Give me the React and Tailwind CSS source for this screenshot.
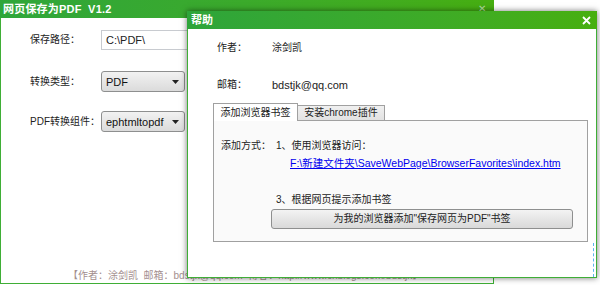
import React from 'react';

const font = "font-['Liberation_Sans','Noto_Sans_CJK_SC',sans-serif]";

function ArrowDown() {
    return (
        <svg width="7" height="4" viewBox="0 0 7 4" className="shrink-0">
            <path d="M0 0 L7 0 L3.5 4 Z" fill="#222" />
        </svg>
    );
}

function Select({ value }) {
    return (
        <div className="w-[84px] h-[21px] flex items-center justify-between pl-[4px] pr-[5px] rounded-[3px] border border-[#8e8f8f] bg-gradient-to-b from-[#f2f2f2] to-[#dbdbdb] text-[11px] text-[#111]">
            <span>{value}</span>
            <ArrowDown />
        </div>
    );
}

function MainWindow() {
    return (
        <div className="absolute left-0 top-0 w-[494px] h-[284px] border border-[#3fae36] bg-white flex flex-col">
            <div className="h-[18px] shrink-0 flex items-start justify-between bg-gradient-to-r from-[#2fa63a] to-[#46ae10] pl-[3px] pr-[8px] -mx-px -mt-px">
                <span className="text-white font-bold text-[11px] leading-[18px] tracking-[0.2px]">网页保存为PDF&nbsp;&nbsp;V1.2</span>
                <div className="flex items-center gap-[36px] text-white/60 text-[10px] mt-[2px]">
                    <span className="block w-[8px] h-[2px] bg-white/60 mt-[5px]" />
                    <span>✕</span>
                </div>
            </div>
            <div className="flex flex-col pl-[29px] pt-[12px] text-[10px] text-[#222]">
                <div className="flex items-center h-[20px]">
                    <span className="w-[71px]">保存路径：</span>
                    <div className="w-[120px] h-[20px] border border-[#c8cbd0] flex items-center pl-[4px] text-[11px]">C:\PDF\</div>
                </div>
                <div className="flex items-center h-[21px] mt-[21px]">
                    <span className="w-[71px]">转换类型：</span>
                    <Select value="PDF" />
                </div>
                <div className="flex items-center h-[21px] mt-[19px]">
                    <span className="w-[71px]">PDF转换组件：</span>
                    <Select value="ephtmltopdf" />
                </div>
            </div>
            <div className="mt-auto pl-[67px] pb-0 text-[10px] text-[#a48f8f] whitespace-nowrap">
                【作者：涂剑凯&nbsp;&nbsp;邮箱：bdstjk@qq.com&nbsp;&nbsp;博客：http://www.cnblogs.com/bdstjk】
            </div>
        </div>
    );
}

function HelpWindow() {
    return (
        <div className="absolute left-[187px] top-[11px] w-[410px] h-[267px] border border-[#3fae36] bg-white flex flex-col shadow-[0_0_6px_rgba(0,0,0,0.55)]">
            <div className="h-[18px] shrink-0 flex items-center justify-between bg-gradient-to-r from-[#2ea53a] to-[#47af0e] pl-[4px] pr-[6px] -mx-px -mt-px">
                <span className="text-white font-bold text-[11px]">帮助</span>
                <svg width="9" height="9" viewBox="0 0 9 9">
                    <path d="M1 1 L8 8 M8 1 L1 8" stroke="#fff" strokeWidth="1.8" />
                </svg>
            </div>
            <div className="flex flex-col text-[10px] text-[#222]">
                <div className="flex items-center h-[14px] mt-[12px] pl-[29px]">
                    <span className="w-[55px]">作者：</span>
                    <span>涂剑凯</span>
                </div>
                <div className="flex items-center h-[14px] mt-[23px] pl-[29px]">
                    <span className="w-[55px]">邮箱：</span>
                    <span className="text-[11px]">bdstjk@qq.com</span>
                </div>
                <div className="ml-[25px] mt-[10px] w-[375px]">
                    <div className="flex items-end h-[18px]">
                        <div className="h-[18px] w-[85px] flex items-center justify-center bg-white border border-b-0 border-[#a0a0a0] relative z-10 -mb-px">添加浏览器书签</div>
                        <div className="h-[15px] w-[87px] flex items-center justify-center bg-gradient-to-b from-[#f0f0f0] to-[#e2e2e2] border border-l-0 border-b-0 border-[#a0a0a0]">安装chrome插件</div>
                    </div>
                    <div className="h-[122px] border border-[#a0a0a0] bg-[#fafafa] flex pl-[7px] pt-[18px]">
                        <span className="w-[55px]">添加方式：</span>
                        <div className="flex flex-col">
                            <span>1、使用浏览器访问：</span>
                            <span className="ml-[14px] mt-[3px] text-[#0000ee] underline text-[10.5px] leading-[14px]">F:\新建文件夹\SaveWebPage\BrowserFavorites\index.htm</span>
                            <span className="mt-[23px]">3、根据网页提示添加书签</span>
                            <div className="-ml-[5px] mt-[2px] w-[302px] h-[20px] rounded-[3px] border border-[#8e8f8f] bg-gradient-to-b from-[#f3f3f3] to-[#d9d9d9] flex items-center justify-center">
                                为我的浏览器添加"保存网页为PDF"书签
                            </div>
                        </div>
                    </div>
                </div>
                <div className="ml-auto mr-[2px] mt-[1px] h-[34px] border-r border-dashed border-[#5ab4ee]" />
            </div>
        </div>
    );
}

export default function App() {
    return (
        <div className={`relative w-[600px] h-[285px] bg-white overflow-hidden leading-[14px] ${font}`}>
            <MainWindow />
            <HelpWindow />
        </div>
    );
}
